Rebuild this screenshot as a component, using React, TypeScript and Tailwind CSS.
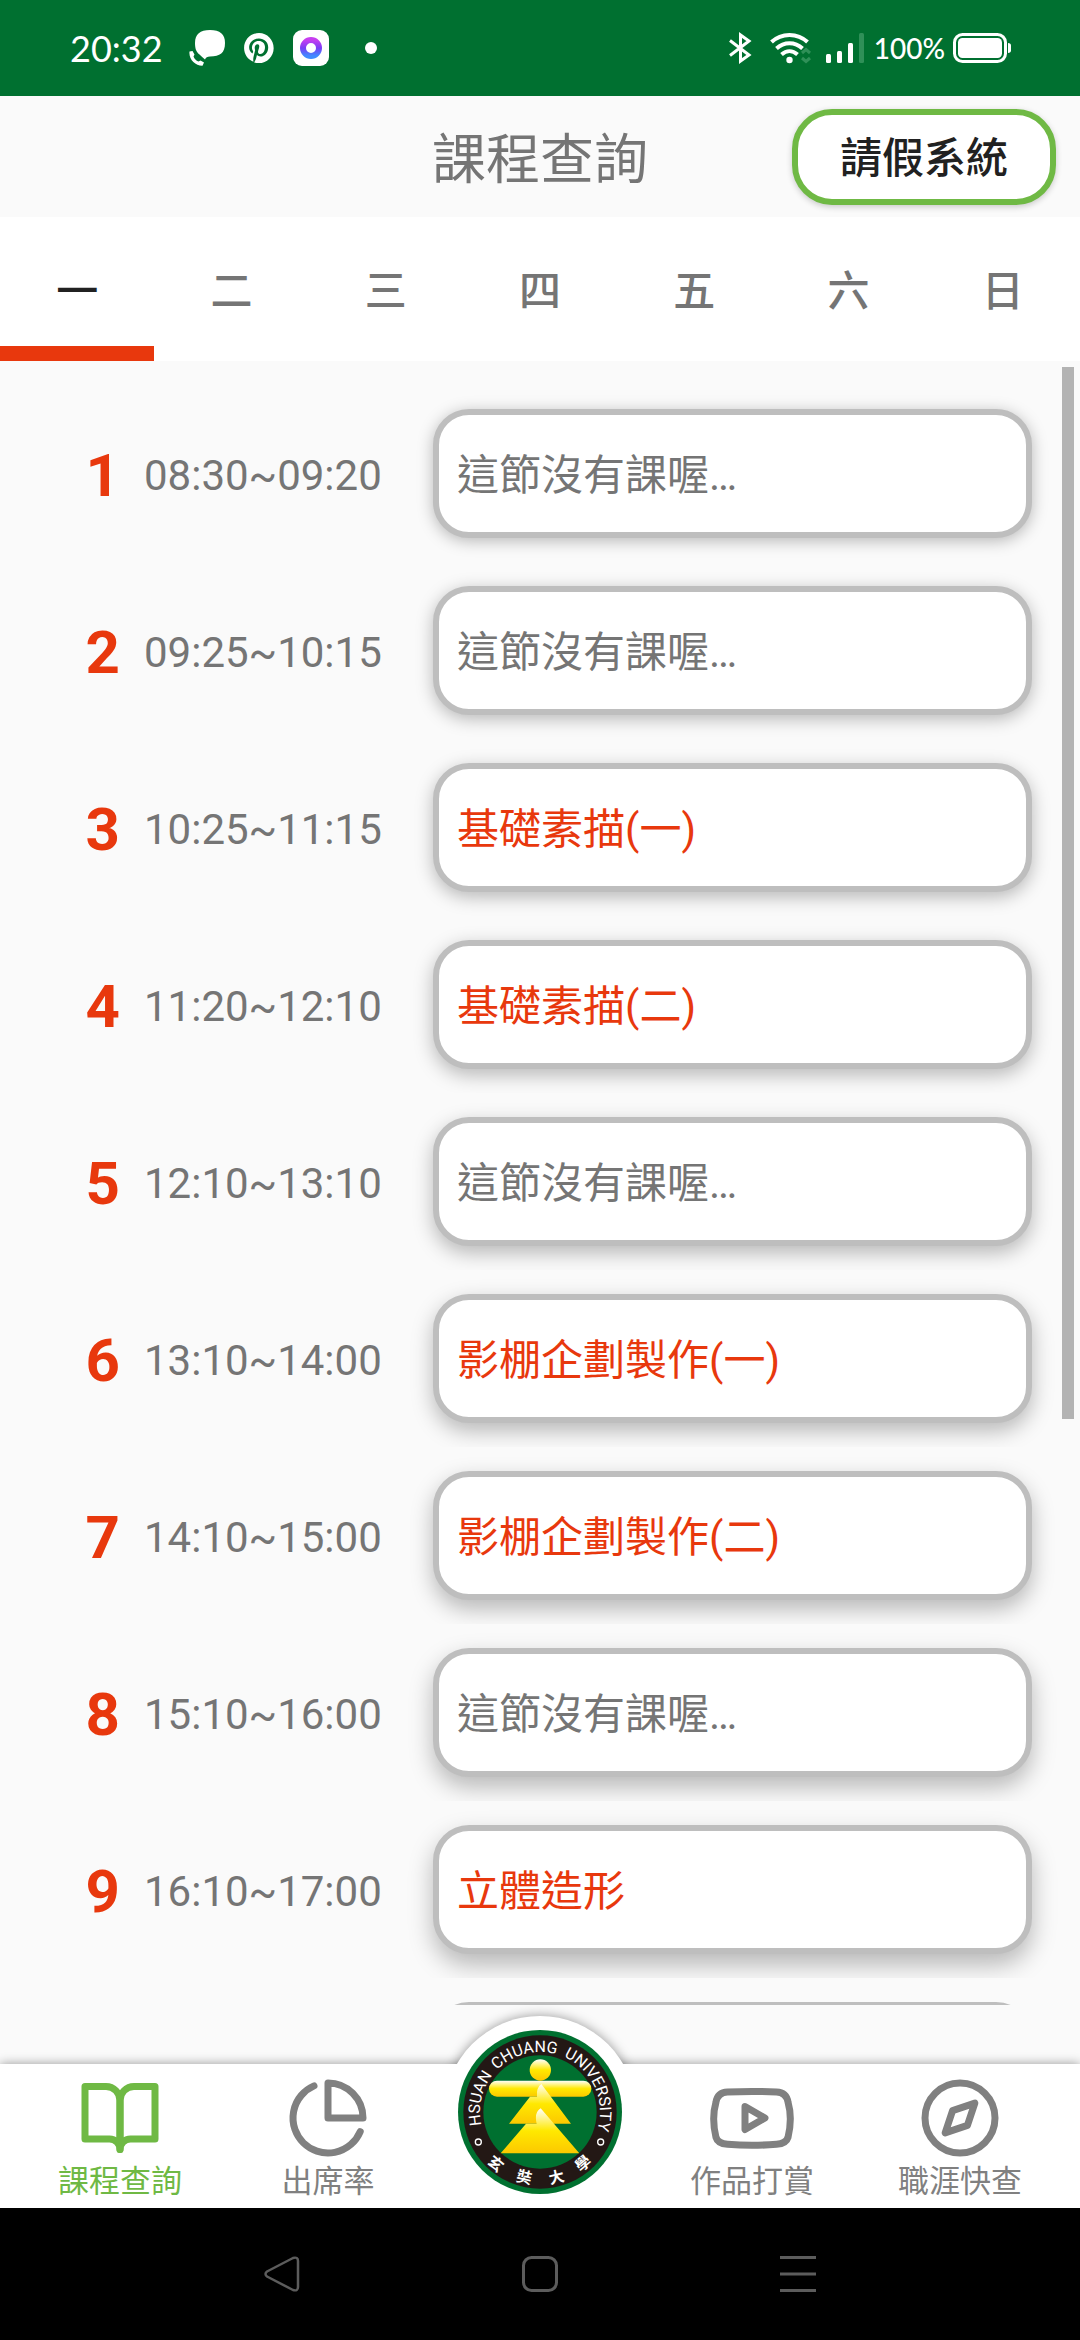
import { useState } from "react";

const periods = [
  { no: 1, time: "08:30~09:20", course: "" },
  { no: 2, time: "09:25~10:15", course: "" },
  { no: 3, time: "10:25~11:15", course: "基礎素描(一)" },
  { no: 4, time: "11:20~12:10", course: "基礎素描(二)" },
  { no: 5, time: "12:10~13:10", course: "" },
  { no: 6, time: "13:10~14:00", course: "影棚企劃製作(一)" },
  { no: 7, time: "14:10~15:00", course: "影棚企劃製作(二)" },
  { no: 8, time: "15:10~16:00", course: "" },
  { no: 9, time: "16:10~17:00", course: "立體造形" },
];

const days = ["一", "二", "三", "四", "五", "六", "日"];

function StatusBar() {
  return (
    <div className="flex h-24 shrink-0 items-center justify-between bg-[#007030] pr-[69px] pl-[70px] font-['Lato',sans-serif] text-white">
      <div className="flex items-center">
        <span className="text-[36px] leading-none">20:32</span>
        <svg className="ml-[26px] h-9 w-9" viewBox="0 0 36 36" fill="white">
          <path d="M21 0C31 0 36 4 36 13C36 23 31 26.500 21 26.500Q17 26.500 16 29.500Q13 27 10.500 24.500C7 22 6 18 6 13C6 4 11 0 21 0Z" />
          <path d="M0.500 21.500L3.500 21L5.500 24.500L4.500 26.500C5.500 29 7 30.500 9.500 31.500L11.500 30.500L15 32.500L13.500 35.800C6.500 36 -0.500 29.500 0.500 21.500Z" />
        </svg>
        <svg className="ml-[18px] h-8 w-8" viewBox="0 0 24 24" fill="white">
          <path d="M12 0.800C5.800 0.800 0.800 5.800 0.800 12c0 4.700 2.900 8.700 7 10.400-.1-.9-.2-2.200 0-3.200.2-.9 1.300-5.600 1.300-5.600s-.3-.7-.3-1.700c0-1.600.9-2.700 2-2.700 1 0 1.400.7 1.400 1.600 0 1-.6 2.400-.9 3.700-.3 1.100.6 2 1.700 2 2 0 3.500-2.100 3.500-5.200 0-2.700-1.900-4.600-4.700-4.600-3.200 0-5.100 2.400-5.100 4.900 0 1 .4 2 .8 2.600.1.100.1.200.1.300l-.3 1.300c0 .2-.2.300-.4.200-1.400-.7-2.300-2.700-2.300-4.300 0-3.500 2.600-6.800 7.400-6.800 3.900 0 6.900 2.800 6.900 6.500 0 3.900-2.400 7-5.800 7-1.100 0-2.200-.6-2.600-1.300l-.7 2.700c-.3 1-.9 2.200-1.400 3 1.100.3 2.200.5 3.400.5 6.200 0 11.200-5 11.200-11.200S18.200.8 12 .8z" />
        </svg>
        <svg className="ml-[18px] h-9 w-9" viewBox="0 0 36 36">
          <defs>
            <linearGradient id="ring" x1="0" y1="0" x2="0" y2="1">
              <stop offset="0" stopColor="#c63df0" />
              <stop offset="0.500" stopColor="#7a3bf5" />
              <stop offset="1" stopColor="#3f8cff" />
            </linearGradient>
          </defs>
          <rect width="36" height="36" rx="9" fill="white" />
          <circle cx="18" cy="18" r="8" fill="none" stroke="url(#ring)" strokeWidth="6" />
        </svg>
        <span className="ml-9 h-3 w-3 rounded-full bg-white" />
      </div>
      <div className="flex items-center">
        <svg className="h-8 w-6" viewBox="0 0 24 32" fill="none" stroke="white" strokeWidth="3">
          <path d="M2 8.500L21 23L12.500 29V3L21 9L2 23.500" />
        </svg>
        <svg className="ml-[18px] h-8 w-11" viewBox="0 0 44 32" fill="none" stroke="white" strokeWidth="4">
          <path d="M1.500 10C11.500 0.500 27.500 0.500 37.500 10" />
          <path d="M6.500 16.500C14 9.500 25 9.500 32.500 16.500" />
          <path d="M11.500 22.500C16.500 18 22.500 18 27.500 22.500" />
          <circle cx="19.500" cy="28" r="3.200" fill="white" stroke="none" />
          <path d="M32 21L36 17.500L40 21M32 26L36 29.500L40 26" stroke="#2f9058" strokeWidth="3" />
        </svg>
        <svg className="ml-3 h-[30px] w-10" viewBox="0 0 40 30" fill="white">
          <rect x="0" y="21" width="5" height="9" rx="1.500" />
          <rect x="11" y="18" width="5" height="12" rx="1.500" />
          <rect x="22" y="10" width="5" height="20" rx="1.500" />
          <rect x="33" y="0" width="5" height="30" rx="1.500" fill="#2f9058" />
        </svg>
        <span className="ml-2 text-[28px] leading-none font-medium">100%</span>
        <svg className="ml-2 h-[30px] w-[58px]" viewBox="0 0 58 30" fill="white">
          <rect x="1.500" y="1.500" width="51" height="27" rx="8" fill="none" stroke="white" strokeWidth="3" />
          <rect x="5" y="5" width="44" height="20" rx="4.500" />
          <path d="M55 10C57 10 58 11 58 12.500V17.500C58 19 57 20 55 20Z" />
        </svg>
      </div>
    </div>
  );
}

function Header() {
  return (
    <header className="grid h-[121px] shrink-0 grid-cols-[1fr_auto_1fr] items-center px-6">
      <h1 className="col-start-2 pt-2 text-[54px] leading-none text-[#757575]">課程查詢</h1>
      <button className="h-24 w-66 justify-self-end rounded-[40px] border-6 border-[#6fb944] bg-white pt-1 text-[42px] leading-none font-medium text-[#212121] shadow-[0_2px_6px_rgba(0,0,0,0.2)]">
        請假系統
      </button>
    </header>
  );
}

function DayTabs({ active, onSelect }: { active: number; onSelect: (day: number) => void }) {
  return (
    <div role="tablist" className="grid h-36 shrink-0 grid-cols-7 bg-white">
      {days.map((day, i) => (
        <button
          key={day}
          role="tab"
          aria-selected={i === active}
          onClick={() => onSelect(i)}
          className={
            i === active
              ? "border-b-15 border-[#e8380d] pt-5 text-[42px] leading-none font-medium text-[#212121]"
              : "border-b-15 border-transparent pt-5 text-[42px] leading-none font-medium text-[#757575]"
          }
        >
          {day}
        </button>
      ))}
    </div>
  );
}

function PeriodRow({ no, time, course }: { no: number; time: string; course: string }) {
  return (
    <li className="flex h-[177px] items-center overflow-hidden pr-12">
      <span className="w-30 shrink-0 pt-1 text-right text-[60px] leading-none font-bold text-[#e8380d]">{no}</span>
      <span className="ml-6 w-[289px] shrink-0 pt-1 text-[42px] leading-none text-[#757575]">{time}</span>
      <div
        className="flex h-[129px] flex-1 items-center rounded-[36px] border-6 border-[#bebebe] bg-white pt-1 pl-[18px] text-[42px] leading-none"
        style={{ boxShadow: `0 ${2 + no}px ${15 + no}px rgba(0,0,0,0.27)` }}
      >
        {course ? <span className="text-[#e8380d]">{course}</span> : <span className="text-[#757575]">這節沒有課喔…</span>}
      </div>
    </li>
  );
}

function Emblem() {
  return (
    <svg className="h-41 w-41" viewBox="174 211 492 492">
      <defs>
        <path id="rim" d="M244.300 496.300A180 180 0 1 1 583.100 533" />
        <linearGradient id="gold" x1="0" y1="0" x2="0" y2="1">
          <stop offset="0" stopColor="#ffffff" />
          <stop offset="0.500" stopColor="#ffe900" />
          <stop offset="1" stopColor="#fcc800" />
        </linearGradient>
      </defs>
      <circle cx="420" cy="457" r="246" fill="#007030" />
      <circle cx="420" cy="457" r="230" fill="#231815" />
      <circle cx="420" cy="457" r="170" fill="#007030" />
      <g fill="white" fontSize="48" fontFamily="Roboto, sans-serif">
        <text>
          <textPath href="#rim" startOffset="0">HSUAN</textPath>
        </text>
        <text>
          <textPath href="#rim" startOffset="178">CHUANG</textPath>
        </text>
        <text>
          <textPath href="#rim" startOffset="395">UNIVERSITY</textPath>
        </text>
      </g>
      <g fill="white" fontSize="46" fontWeight="700" textAnchor="middle" fontFamily="'Noto Sans CJK TC', sans-serif">
        <text transform="translate(287 612) rotate(40)" y="17">玄</text>
        <text transform="translate(373 652) rotate(13)" y="17">奘</text>
        <text transform="translate(469 652) rotate(-13)" y="17">大</text>
        <text transform="translate(549 611) rotate(-40)" y="17">學</text>
      </g>
      <circle cx="235" cy="547" r="9" fill="none" stroke="white" strokeWidth="4" />
      <circle cx="602" cy="547" r="9" fill="none" stroke="white" strokeWidth="4" />
      <rect x="267" y="363" width="307" height="48" rx="24" fill="url(#gold)" />
      <circle cx="421" cy="331" r="32" fill="url(#gold)" />
      <path d="M424 373L513 492H327L390 411H411Q408 384 424 373Z" fill="url(#gold)" />
      <path d="M422 446L538 581H302L378 492H410Q402 458 422 446Z" fill="url(#gold)" />
    </svg>
  );
}

function NavItem({ label, active, children }: { label: string; active?: boolean; children: React.ReactNode }) {
  return (
    <a
      href="#"
      className={
        active
          ? "flex min-w-0 flex-[208] flex-col items-center pt-3 text-[#6fb944]"
          : "flex min-w-0 flex-[208] flex-col items-center pt-3 text-[#808080]"
      }
    >
      {children}
      <span className="mt-[6px] text-[31px] leading-none whitespace-nowrap">{label}</span>
    </a>
  );
}

function BottomNav() {
  const stroke = {
    className: "h-21 w-21",
    viewBox: "0 0 24 24",
    fill: "none",
    stroke: "currentColor",
    strokeWidth: 2,
    strokeLinecap: "round" as const,
    strokeLinejoin: "round" as const,
  };
  return (
    <nav className="relative flex h-36 shrink-0 bg-white px-4 shadow-[0_0_10px_rgba(0,0,0,0.4)]">
      <div className="absolute bottom-full left-1/2 h-18 w-60 -translate-x-1/2 overflow-hidden pt-6">
        <div className="mx-auto h-48 w-48 rounded-full bg-white shadow-[0_0_12px_rgba(0,0,0,0.4)]" />
      </div>
      <NavItem label="課程查詢" active>
        <svg {...stroke}>
          <path d="M2 3h6a4 4 0 0 1 4 4v14a3 3 0 0 0-3-3H2z" />
          <path d="M22 3h-6a4 4 0 0 0-4 4v14a3 3 0 0 1 3-3h7z" />
        </svg>
      </NavItem>
      <NavItem label="出席率">
        <svg {...stroke}>
          <path d="M21.210 15.890A10 10 0 1 1 8 2.830" />
          <path d="M22 12A10 10 0 0 0 12 2v10z" />
        </svg>
      </NavItem>
      <a href="#" aria-label="玄奘大學" className="relative flex flex-[216] justify-center">
        <span className="absolute bottom-[14px]">
          <Emblem />
        </span>
      </a>
      <NavItem label="作品打賞">
        <svg {...stroke} overflow="visible">
          <path d="M5 4.600Q12 4.200 19 4.600Q21.800 4.700 22.300 7.500Q23.600 12 22.300 17.500Q21.800 19.300 19 19.500Q12 20.100 5 19.500Q2.200 19.300 1.700 17.500Q0.400 12 1.700 7.500Q2.200 4.700 5 4.600Z" />
          <path d="M10 8.700L15.700 12L10 15.300Z" />
        </svg>
      </NavItem>
      <NavItem label="職涯快查">
        <svg {...stroke}>
          <circle cx="12" cy="12" r="10" />
          <path d="M16.240 7.760L14.120 14.120L7.760 16.240L9.880 9.880Z" />
        </svg>
      </NavItem>
    </nav>
  );
}

function SystemNav() {
  return (
    <div className="flex h-33 shrink-0 items-center justify-center gap-[222px] bg-black text-[#5c5c5c]">
      <button aria-label="返回">
        <svg className="h-9 w-9" viewBox="0 0 36 36" fill="none" stroke="currentColor" strokeWidth="2.500" strokeLinejoin="round">
          <path d="M3 15.500L29 2Q34 0.500 34 5V31Q34 35.500 29 34L3 20.500Q0 18 3 15.500Z" />
        </svg>
      </button>
      <button aria-label="主畫面">
        <svg className="h-9 w-9" viewBox="0 0 36 36" fill="none" stroke="currentColor" strokeWidth="3">
          <rect x="1.500" y="1.500" width="33" height="33" rx="8" />
        </svg>
      </button>
      <button aria-label="最近">
        <svg className="h-9 w-9" viewBox="0 0 36 36" fill="none" stroke="currentColor" strokeWidth="3">
          <path d="M0 1.500H36M0 18H36M0 34.500H36" />
        </svg>
      </button>
    </div>
  );
}

export default function App() {
  const [day, setDay] = useState(0);
  return (
    <div className="flex h-screen flex-col bg-[#fafafa] font-['Roboto','Noto_Sans_CJK_TC',sans-serif]">
      <StatusBar />
      <Header />
      <DayTabs active={day} onSelect={setDay} />
      <main className="relative mb-[59px] min-h-0 flex-1">
        <ol className="h-full overflow-y-auto pt-6 [scrollbar-width:none]">
          {periods.map((p) => (
            <PeriodRow key={p.no} {...p} />
          ))}
          <li className="flex h-[177px] items-center overflow-hidden pr-12 pl-[433px]">
            <div className="h-[129px] flex-1 rounded-[36px] border-6 border-[#bebebe] bg-white" />
          </li>
        </ol>
        <div className="absolute top-[6px] right-[6px] h-[64%] w-3 bg-[#b3b3b3]" />
      </main>
      <BottomNav />
      <SystemNav />
    </div>
  );
}
